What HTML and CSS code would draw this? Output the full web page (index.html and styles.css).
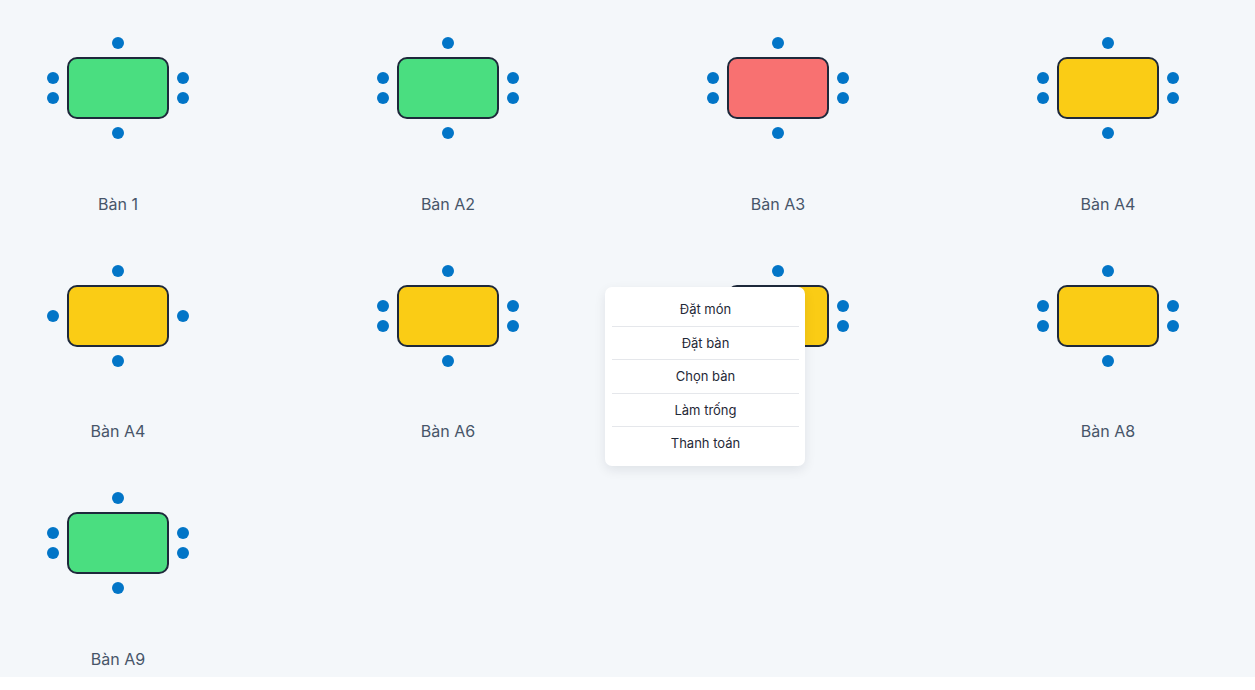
FILE: index.html
```html
<!DOCTYPE html>
<html lang="vi">
<head>
<meta charset="utf-8">
<title>Sơ đồ bàn</title>
<link rel="stylesheet" href="styles.css">
</head>
<body>
<div class="floor">
  <div class="grid">
    <div class="cell">
      <div class="seats">
        <div class="dot"></div>
        <div class="mid"><div class="side"><div class="dot"></div><div class="dot"></div></div><div class="table green"></div><div class="side"><div class="dot"></div><div class="dot"></div></div></div>
        <div class="dot"></div>
      </div>
      <div class="label">Bàn 1</div>
    </div>
    <div class="cell">
      <div class="seats">
        <div class="dot"></div>
        <div class="mid"><div class="side"><div class="dot"></div><div class="dot"></div></div><div class="table green"></div><div class="side"><div class="dot"></div><div class="dot"></div></div></div>
        <div class="dot"></div>
      </div>
      <div class="label">Bàn A2</div>
    </div>
    <div class="cell">
      <div class="seats">
        <div class="dot"></div>
        <div class="mid"><div class="side"><div class="dot"></div><div class="dot"></div></div><div class="table red"></div><div class="side"><div class="dot"></div><div class="dot"></div></div></div>
        <div class="dot"></div>
      </div>
      <div class="label">Bàn A3</div>
    </div>
    <div class="cell">
      <div class="seats">
        <div class="dot"></div>
        <div class="mid"><div class="side"><div class="dot"></div><div class="dot"></div></div><div class="table yellow"></div><div class="side"><div class="dot"></div><div class="dot"></div></div></div>
        <div class="dot"></div>
      </div>
      <div class="label">Bàn A4</div>
    </div>
    <div class="cell">
      <div class="seats">
        <div class="dot"></div>
        <div class="mid"><div class="side"><div class="dot"></div></div><div class="table yellow"></div><div class="side"><div class="dot"></div></div></div>
        <div class="dot"></div>
      </div>
      <div class="label">Bàn A4</div>
    </div>
    <div class="cell">
      <div class="seats">
        <div class="dot"></div>
        <div class="mid"><div class="side"><div class="dot"></div><div class="dot"></div></div><div class="table yellow"></div><div class="side"><div class="dot"></div><div class="dot"></div></div></div>
        <div class="dot"></div>
      </div>
      <div class="label">Bàn A6</div>
    </div>
    <div class="cell">
      <div class="seats">
        <div class="dot"></div>
        <div class="mid"><div class="side"><div class="dot"></div><div class="dot"></div></div><div class="table yellow"></div><div class="side"><div class="dot"></div><div class="dot"></div></div></div>
        <div class="dot"></div>
      </div>
      <div class="label">Bàn A7</div>
    </div>
    <div class="cell">
      <div class="seats">
        <div class="dot"></div>
        <div class="mid"><div class="side"><div class="dot"></div><div class="dot"></div></div><div class="table yellow"></div><div class="side"><div class="dot"></div><div class="dot"></div></div></div>
        <div class="dot"></div>
      </div>
      <div class="label">Bàn A8</div>
    </div>
    <div class="cell">
      <div class="seats">
        <div class="dot"></div>
        <div class="mid"><div class="side"><div class="dot"></div><div class="dot"></div></div><div class="table green"></div><div class="side"><div class="dot"></div><div class="dot"></div></div></div>
        <div class="dot"></div>
      </div>
      <div class="label">Bàn A9</div>
    </div>
  </div>
  <ul class="menu">
    <li>Đặt món</li>
    <li>Đặt bàn</li>
    <li>Chọn bàn</li>
    <li>Làm trống</li>
    <li>Thanh toán</li>
  </ul>
</div>
</body>
</html>
```
FILE: styles.css
```css
html { background: #ffffff; }
body {
  margin: 0;
  font-family: Inter, "Noto Sans", "Liberation Sans", sans-serif;
}
.floor {
  position: relative;
  background: #f4f7fa;
  padding: 37px 0 6px 0;
}
.grid {
  display: grid;
  grid-template-columns: repeat(4, 236px);
  column-gap: 94px;
  row-gap: 49px;
}
.cell {
  display: flex;
  flex-direction: column;
  align-items: center;
}
.seats {
  display: flex;
  flex-direction: column;
  align-items: center;
  gap: 8px;
}
.mid {
  display: flex;
  align-items: center;
  gap: 8px;
}
.side {
  display: flex;
  flex-direction: column;
  gap: 8px;
}
.dot {
  width: 12px;
  height: 12px;
  border-radius: 50%;
  background: #0275c7;
}
.table {
  box-sizing: border-box;
  width: 102px;
  height: 62px;
  border: 2px solid #1e293b;
  border-radius: 10px;
}
.green { background: #4ade80; }
.red { background: #f87171; }
.yellow { background: #facc15; }
.label {
  margin-top: 52.5px;
  font-size: 16px;
  line-height: 24px;
  color: #475569;
}
.menu {
  position: absolute;
  left: 605px;
  top: 287px;
  width: 200px;
  box-sizing: border-box;
  margin: 0;
  padding: 6px 6px 6px 7px;
  list-style: none;
  background: #ffffff;
  border-radius: 7px;
  box-shadow: 0 4px 12px rgba(15, 23, 42, 0.09);
}
.menu li {
  height: 32.5px;
  display: flex;
  align-items: center;
  justify-content: center;
  font-size: 13px;
  color: #1f2937;
  border-bottom: 1px solid #e5e7eb;
}
.menu li:last-child { border-bottom: none; }
```
